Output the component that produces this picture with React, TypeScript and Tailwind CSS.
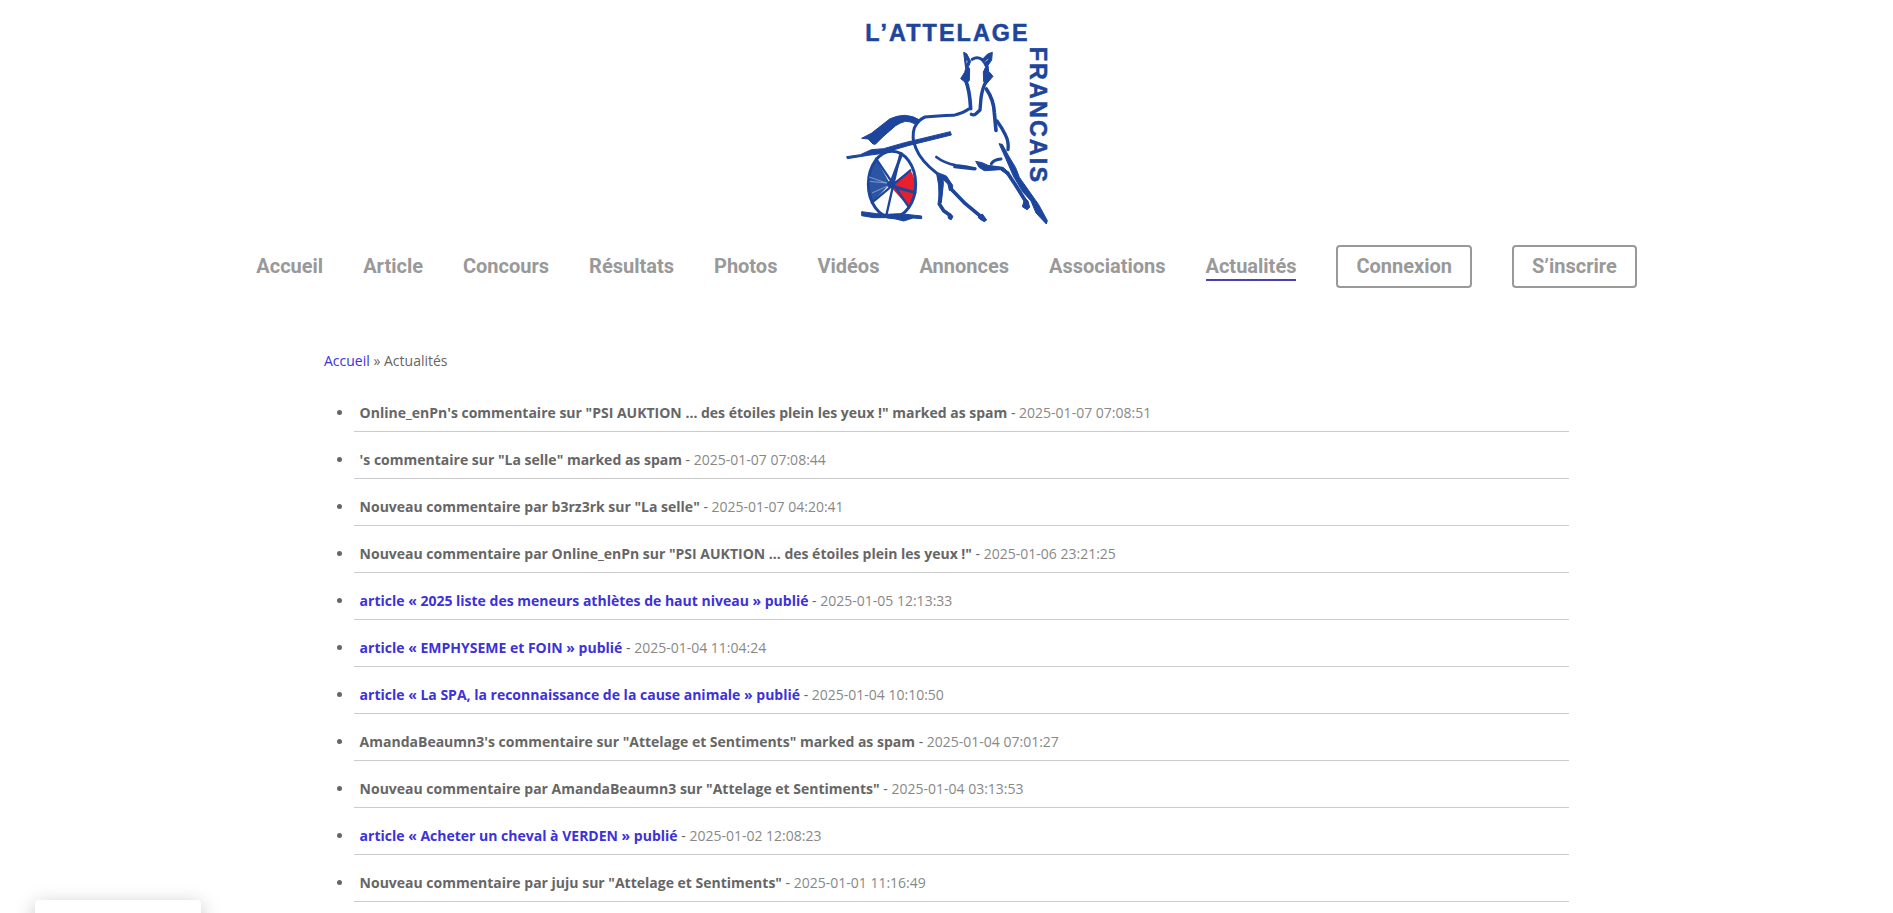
type NewsItem = { title: string; date: string; link?: boolean };

const navLinks = [
  'Accueil', 'Article', 'Concours', 'Résultats', 'Photos',
  'Vidéos', 'Annonces', 'Associations', 'Actualités',
];

const news: NewsItem[] = [
  { title: 'Online_enPn\'s commentaire sur "PSI AUKTION … des étoiles plein les yeux !" marked as spam', date: '2025-01-07 07:08:51' },
  { title: '\'s commentaire sur "La selle" marked as spam', date: '2025-01-07 07:08:44' },
  { title: 'Nouveau commentaire par b3rz3rk sur "La selle"', date: '2025-01-07 04:20:41' },
  { title: 'Nouveau commentaire par Online_enPn sur "PSI AUKTION … des étoiles plein les yeux !"', date: '2025-01-06 23:21:25' },
  { title: 'article « 2025 liste des meneurs athlètes de haut niveau » publié', date: '2025-01-05 12:13:33', link: true },
  { title: 'article « EMPHYSEME et FOIN » publié', date: '2025-01-04 11:04:24', link: true },
  { title: 'article « La SPA, la reconnaissance de la cause animale » publié', date: '2025-01-04 10:10:50', link: true },
  { title: 'AmandaBeaumn3\'s commentaire sur "Attelage et Sentiments" marked as spam', date: '2025-01-04 07:01:27' },
  { title: 'Nouveau commentaire par AmandaBeaumn3 sur "Attelage et Sentiments"', date: '2025-01-04 03:13:53' },
  { title: 'article « Acheter un cheval à VERDEN » publié', date: '2025-01-02 12:08:23', link: true },
  { title: 'Nouveau commentaire par juju sur "Attelage et Sentiments"', date: '2025-01-01 11:16:49' },
];

function Logo() {
  return (
    <svg viewBox="2 0 660 660" className="h-[220px] w-[220px]" role="img" aria-label="L’Attelage Français">
      <g fill="#1c459b" stroke="#1c459b" strokeWidth="1.5" fontFamily="'Liberation Sans', Arial, sans-serif" fontWeight="700" fontSize="70">
        <text x="87" y="94" textLength="487" lengthAdjust="spacing">L’ATTELAGE</text>
        <text transform="translate(582 110) rotate(90)" textLength="406" lengthAdjust="spacing">FRANCAIS</text>
      </g>

      {/* wheel */}
      <path d="M161 521 L119 446 Q96 478 97 528 Q99 562 107 578 Z" fill="#2b55a3" />
      <path d="M165 523 L222 481 Q238 502 235 538 Q231 570 218 592 L168 536 Z" fill="#ea1f2d" />
      <g fill="none" stroke="#1c459b" strokeLinecap="round">
        <ellipse cx="167" cy="523" rx="71" ry="99" strokeWidth="9" />
        <path d="M119 446 L218 592 M222 481 L107 578 M192 432 L150 616" strokeWidth="7" />
        <path d="M162 523 L196 432 M166 528 L236 548" strokeWidth="9" />
      </g>
      <path d="M98 501 L160 522 M100 514 L150 519 M107 549 L158 526" stroke="#a9bbdd" strokeWidth="2" fill="none" />
      <circle cx="162" cy="523" r="10" fill="#1c459b" />

      <g fill="#1c459b" stroke="#1c459b" strokeWidth="3" strokeLinejoin="round">
        {/* ground */}
        <path d="M76 605 L121 611 L151 613 L190 611 L256 618 V626 L230 624 L202 633 L178 627 L150 623 L112 623 L76 617 Z" />
        {/* shaft */}
        <path d="M31 440 L72 434 L105 419 L142 416 L205 398 L342 365 L345 375 L215 407 L132 431 L96 436 L33 446 Z" />
        {/* tail */}
        <path d="M76 385 L105 370 L160 327 Q183 316 205 316 Q230 317 250 330 L237 342 Q220 333 207 334 Q192 338 178 347 L140 380 L117 403 L110 402 L101 393 L96 387 Z" />
        {/* blinkers and ears */}
        <path d="M382 127 L391 131 L403 154 L397 169 L391 163 L395 155 L390 145 L389 159 L400 177 L399 211 L391 220 L373 206 L385 187 L388 176 Z" />
        <path d="M468 127 L454 132 L435 151 L441 159 L450 150 L458 140 L455 151 L442 160 L448 171 L441 186 L442 215 L450 222 L470 199 L457 184 L455 166 L466 150 Z" />
        {/* chest and outstretched fore leg */}
        <path d="M418 454 L437 458 L455 466 L500 472 L520 490 L514 495 L492 479 L444 482 L428 472 Z" />
        <path d="M488 401 L498 403 L517 438 L538 473 L549 502 L583 550 L607 584 L633 632 L630 642 L599 609 L584 573 L558 544 L531 498 L509 447 Z" />
        {/* hooves */}
        <path d="M335 620 L341 611 L350 619 L345 629 L337 626 Z" />
        <path d="M425 621 L438 612 L451 630 L444 635 L431 628 Z" />
        <path d="M566 564 L575 573 L580 592 L572 599 L558 590 Z" />
        {/* thighs */}
        <path d="M301 492 L320 500 L321 523 L315 578 L309 578 L307 525 Z" />
        <path d="M304 488 L330 498 L349 526 L348 543 L339 541 L335 523 L316 504 Z" />
      </g>

      <g fill="none" stroke="#1c459b" strokeLinecap="round" strokeLinejoin="round">
        {/* back and rump */}
        <path d="M397 297 Q381 309 352 316 Q302 318 266 321 Q244 330 234 354 Q225 382 238 413 Q253 452 302 490" strokeWidth="9" />
        {/* head */}
        <path d="M408 148 Q422 139 436 148" strokeWidth="9" />
        <path d="M388 211 Q400 240 403 296" strokeWidth="11" />
        <path d="M451 211 Q438 233 434 264 L431 300 L419 311 Q412 317 405 313" strokeWidth="10" />
        {/* neck and shoulder */}
        <path d="M450 237 Q472 269 474 308 L479 361" strokeWidth="11" />
        <path d="M482 333 Q498 355 507 374 Q518 395 515 419" strokeWidth="10" />
        {/* belly */}
        <path d="M300 441 Q323 459 359 466 Q388 469 417 476" strokeWidth="8" />
        <path d="M355 470 L415 477" strokeWidth="9" />
        <path d="M465 461 Q472 449 494 447" strokeWidth="9" />
        {/* hind legs */}
        <path d="M312 506 Q315 548 309 582 L322 602 L341 616" strokeWidth="11" />
        <path d="M345 538 L387 581 L434 620" strokeWidth="11" />
        {/* bent fore leg */}
        <path d="M513 488 L538 526 L566 571 L571 587" strokeWidth="11" />
      </g>
    </svg>
  );
}

export default function App() {
  return (
    <div className="h-[913px] overflow-hidden bg-white font-['Open_Sans','Noto_Sans',sans-serif] text-sm text-[#666]">
      <header className="flex flex-col items-center pt-2.5">
        <Logo />
        <nav className="mt-[15px] flex items-center gap-10 font-[Roboto,sans-serif] text-xl leading-[26px] font-bold whitespace-nowrap text-[#999]">
          {navLinks.map((label) => (
            <a
              key={label}
              href="#"
              className={label === 'Actualités' ? 'mb-px border-y-2 border-t-transparent border-b-[#4a3fb5]' : 'mb-px'}
            >
              {label}
            </a>
          ))}
          <a href="#" className="rounded-[4px] border-2 border-[#999] px-[18px] pt-[6px] pb-[7px]">Connexion</a>
          <a href="#" className="rounded-[4px] border-2 border-[#999] px-[18px] pt-[6px] pb-[7px]">S’inscrire</a>
        </nav>
      </header>

      <main className="mx-auto mt-[61px] w-[1245px]">
        <p className="leading-6">
          <a href="#" className="text-[#3c32d8]">Accueil</a> » Actualités
        </p>
        <ul className="mt-[12px] ml-[30px] list-disc">
          {news.map((item) => (
            <li key={item.title} className="h-[47px] border-b border-[#ccc] pt-[15.5px] pl-[5.6px] leading-6">
              <strong className={item.link ? 'font-bold text-[#3c32d8]' : 'font-bold'}>{item.title}</strong>
              {' - '}
              <span className="text-[#888]">{item.date}</span>
            </li>
          ))}
        </ul>
      </main>

      <aside className="fixed top-[900px] left-[35px] h-20 w-[166px] rounded-[4px] bg-white shadow-[0_5px_20px_rgba(0,0,0,0.25)]" />
    </div>
  );
}
